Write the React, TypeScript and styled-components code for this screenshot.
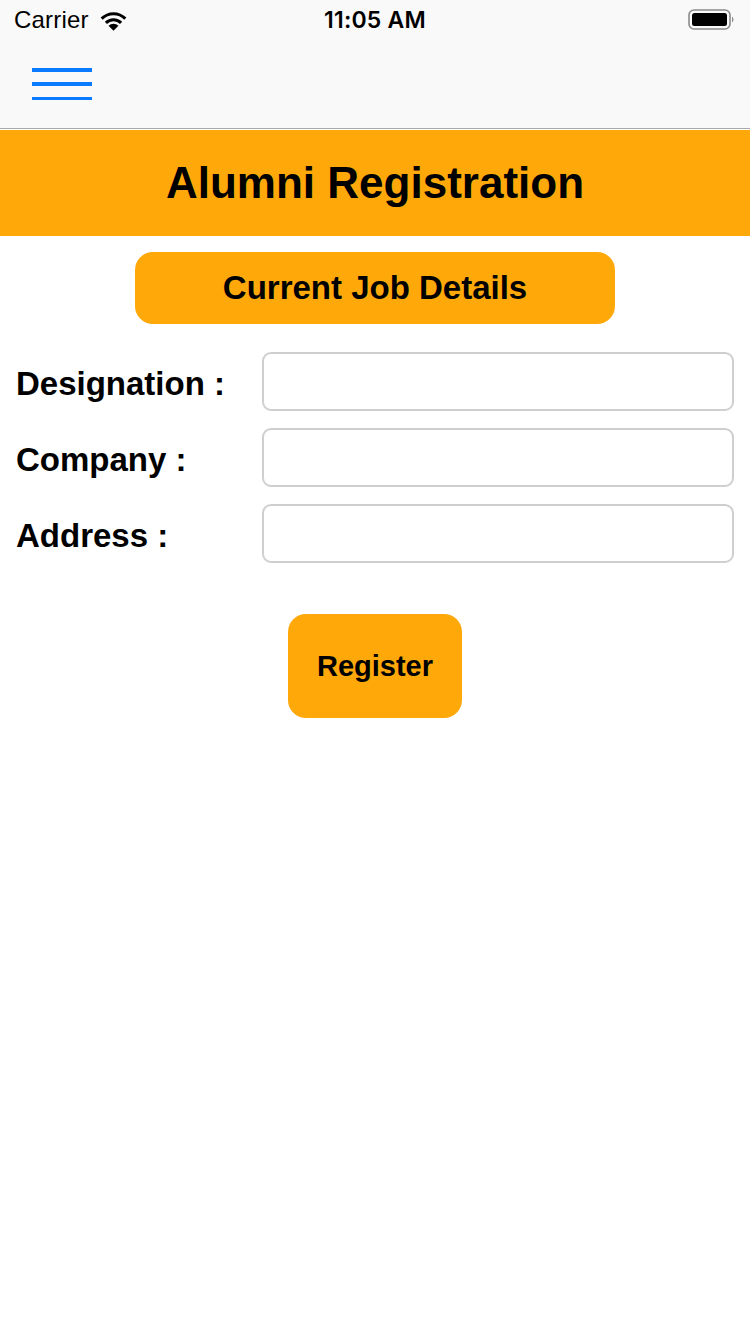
import React from "react";
import styled, { createGlobalStyle } from "styled-components";

const Global = createGlobalStyle`
  html, body { margin: 0; padding: 0; background: #ffffff; }
  body { font-family: "Liberation Sans", Arial, sans-serif; }
  * { box-sizing: border-box; }
`;

const Page = styled.div`
  width: 750px;
  min-height: 1334px;
  background: #ffffff;
  display: flex;
  flex-direction: column;
`;

const TopBar = styled.header`
  background: #f9f9f9;
  border-bottom: 1px solid #a9a9a9;
  display: flex;
  flex-direction: column;
`;

const StatusBar = styled.div`
  height: 40px;
  display: grid;
  grid-template-columns: 1fr auto 1fr;
  align-items: center;
  padding: 0 14px;
  color: #000;
`;

const StatusLeft = styled.div`
  display: flex;
  align-items: center;
  gap: 9px;
  font-family: "Liberation Sans", Arial, sans-serif;
  font-size: 24px;
  letter-spacing: 0.2px;
`;

const Time = styled.div`
  font-family: "Inter", "Liberation Sans", Arial, sans-serif;
  font-size: 23px;
  font-weight: 600;
  letter-spacing: 0.2px;
`;

const StatusRight = styled.div`
  display: flex;
  justify-content: flex-end;
`;

const NavBar = styled.div`
  height: 88px;
  display: flex;
  align-items: center;
  padding-left: 32px;
`;

const MenuButton = styled.button`
  width: 60px;
  height: 32px;
  border: none;
  background: transparent;
  padding: 0;
  display: flex;
  flex-direction: column;
  justify-content: space-between;
`;

const MenuLine = styled.span`
  display: block;
  height: 3.5px;
  width: 60px;
  background: #0a7aff;
`;

const TitleBand = styled.div`
  margin-top: 1px;
  height: 106px;
  background: #ffa80a;
  display: flex;
  align-items: center;
  justify-content: center;
`;

const Title = styled.h1`
  margin: 0;
  font-size: 44px;
  font-weight: 700;
  color: #000;
`;

const Content = styled.main`
  display: flex;
  flex-direction: column;
  align-items: center;
  padding: 16px 16px 0;
`;

const SectionPill = styled.div`
  width: 480px;
  height: 72px;
  border-radius: 18px;
  background: #ffa80a;
  display: flex;
  align-items: center;
  justify-content: center;
  font-size: 33px;
  font-weight: 700;
  color: #000;
`;

const Form = styled.form`
  margin-top: 28px;
  width: 100%;
  display: grid;
  grid-template-columns: 246px 1fr;
  row-gap: 17px;
  align-items: center;
`;

const Label = styled.label`
  font-size: 33px;
  font-weight: 700;
  color: #000;
  padding-top: 4px;
`;

const Input = styled.input`
  height: 59px;
  width: 100%;
  border: 2px solid #cfcfcf;
  border-radius: 9px;
  background: #fff;
  font-size: 28px;
  padding: 0 12px;
  outline: none;
`;

const RegisterButton = styled.button`
  margin-top: 51px;
  width: 174px;
  height: 104px;
  border: none;
  border-radius: 18px;
  background: #ffa80a;
  font-family: "Liberation Sans", Arial, sans-serif;
  font-size: 29px;
  font-weight: 700;
  color: #000;
`;

const WifiIcon = () => (
  <svg width="31" height="23" viewBox="0 0 30 22">
    <path d="M15 21 L10.2 16 A7 7 0 0 1 19.8 16 Z" fill="#000" />
    <path d="M6.6 12.3 A12 12 0 0 1 23.4 12.3 L21.3 14.4 A9 9 0 0 0 8.7 14.4 Z" fill="#000" />
    <path d="M2.5 8.2 A17.8 17.8 0 0 1 27.5 8.2 L25.4 10.3 A14.8 14.8 0 0 0 4.6 10.3 Z" fill="#000" />
  </svg>
);

const Battery = () => (
  <svg width="48" height="22" viewBox="0 0 48 22">
    <rect x="1" y="1" width="41" height="19" rx="5" fill="none" stroke="#8a8a8a" strokeWidth="1.6" />
    <rect x="4" y="4" width="35" height="13" rx="2.5" fill="#000" />
    <path d="M44 7.5 A3 3.5 0 0 1 44 13.5 Z" fill="#8a8a8a" />
  </svg>
);

const fields = ["Designation :", "Company :", "Address :"];

export default function App() {
  return (
    <Page>
      <Global />
      <TopBar>
        <StatusBar>
          <StatusLeft>
            Carrier
            <WifiIcon />
          </StatusLeft>
          <Time>11:05 AM</Time>
          <StatusRight>
            <Battery />
          </StatusRight>
        </StatusBar>
        <NavBar>
          <MenuButton type="button" aria-label="menu">
            <MenuLine />
            <MenuLine />
            <MenuLine />
          </MenuButton>
        </NavBar>
      </TopBar>
      <TitleBand>
        <Title>Alumni Registration</Title>
      </TitleBand>
      <Content>
        <SectionPill>Current Job Details</SectionPill>
        <Form onSubmit={(e) => e.preventDefault()}>
          {fields.map((f) => (
            <React.Fragment key={f}>
              <Label>{f}</Label>
              <Input type="text" />
            </React.Fragment>
          ))}
        </Form>
        <RegisterButton type="button">Register</RegisterButton>
      </Content>
    </Page>
  );
}
